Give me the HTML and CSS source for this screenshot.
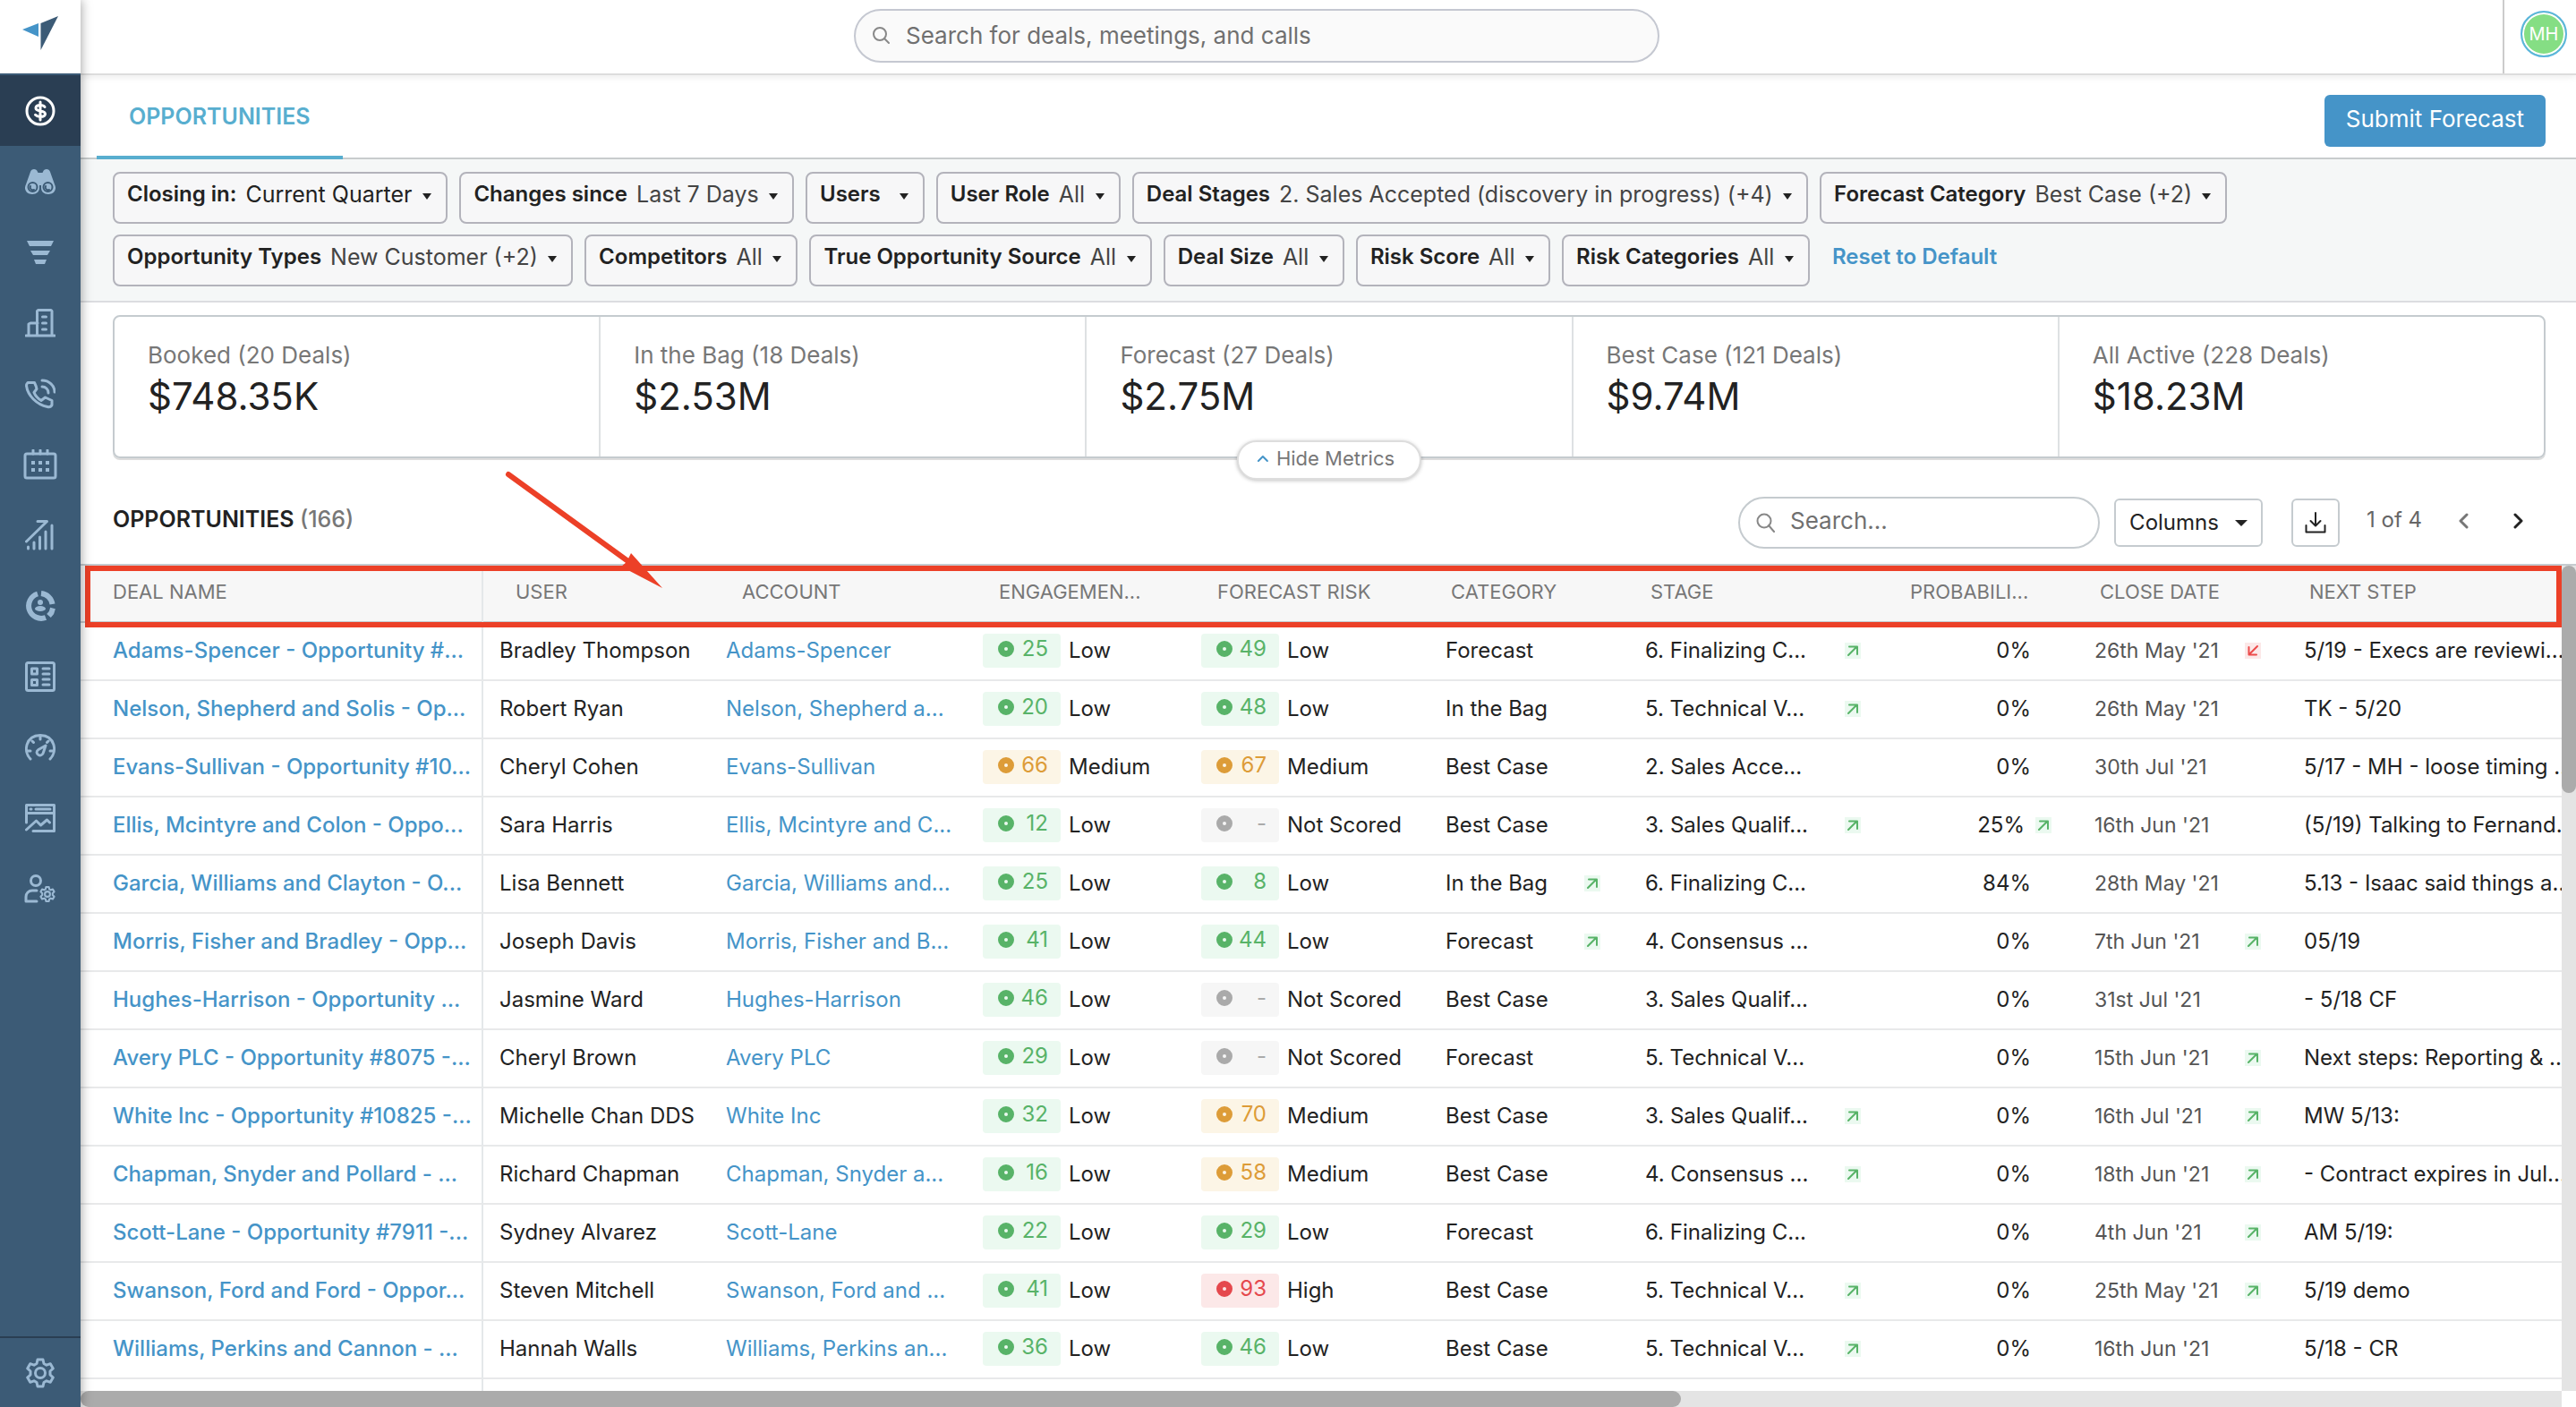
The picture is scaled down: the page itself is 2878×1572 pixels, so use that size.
FILE: index.html
```html
<!DOCTYPE html>
<html lang="en">
<head>
    <meta charset="UTF-8">
    <meta name="viewport" content="width=device-width, initial-scale=1.0">
    <title>Opportunities</title>
    <link rel="stylesheet" href="styles.css">
</head>
<body>
    <svg class="symbols" aria-hidden="true">
        <symbol id="arrow-up" viewBox="0 0 18 18"><path d="M4 14L13 5M5 4.500h9V13" /></symbol>
        <symbol id="arrow-down" viewBox="0 0 18 18"><path d="M14 4L5 13M13 13.500H4.500V5" /></symbol>
        <symbol id="gear" viewBox="0 0 34 34">
            <path d="M14 2h6l1 4.500 3 1.700 4.300-1.500 3 5.200L28 15v4l3.300 3.100-3 5.200-4.300-1.500-3 1.700-1 4.500h-6l-1-4.500-3-1.700-4.300 1.500-3-5.200L6 19v-4L2.700 11.900l3-5.200L10 8.200l3-1.700z" />
            <circle cx="17" cy="17" r="5.500" />
        </symbol>
    </svg>

    <div class="app">
        <nav class="sidebar">
            <a href="#" class="logo" aria-label="Home">
                <svg width="42" height="40" viewBox="0 0 42 40">
                    <path d="M1 15L19 8v15z" fill="#4594c8" />
                    <path d="M21.500 8L41 0 21.500 38z" fill="#3c5b76" />
                </svg>
            </a>
            <a href="#" class="nav-item active" aria-label="Deals">
                <svg width="34" height="34" viewBox="0 0 34 34">
                    <circle cx="17" cy="17" r="15" />
                    <path d="M22 12.500c-1-1.500-2.500-2-5-2-3 0-5 1-5 3.200 0 4.600 10.500 2 10.500 6.600 0 2.200-2.200 3.200-5.500 3.200-2.500 0-4-.6-5.500-2.200M17 7v20" />
                </svg>
            </a>
            <a href="#" class="nav-item" aria-label="Explore">
                <svg width="34" height="30" viewBox="0 0 34 30">
                    <path class="fill" d="M6 4c1-4 7-4 8 0l.5 1h5L20 4c1-4 7-4 8 0l5 14c3 6-1 11-7 11-5 0-8-3-8-7v-3h-2v3c0 4-3 7-8 7-6 0-10-5-7-11z" />
                    <g class="dark"><circle cx="8.500" cy="21" r="5" /><circle cx="25.500" cy="21" r="5" /><path d="M6 20a3 3 0 0 0 4 4M23 20a3 3 0 0 0 4 4" /></g>
                </svg>
            </a>
            <a href="#" class="nav-item" aria-label="Pipeline">
                <svg width="32" height="28" viewBox="0 0 32 28">
                    <path class="fill" d="M1 1h30l-3 6H4zM5 12h22l-3 5H8zM9 22h14l-2 5H11z" />
                </svg>
            </a>
            <a href="#" class="nav-item" aria-label="Accounts">
                <svg width="34" height="32" viewBox="0 0 34 32">
                    <path d="M1 30h32M4 30V17l2-1h8M13.500 30V2.500l1-1H29l1 1V30M19.500 9h4M19.500 16h4M19.500 23h4" />
                </svg>
            </a>
            <a href="#" class="nav-item" aria-label="Calls">
                <svg width="34" height="34" viewBox="0 0 34 34">
                    <path d="M3 4.500h7.500c1 2 2 4.500 2.500 7l-3 4c1.500 4 4 6.500 8 9l4.500-3.500 7.500 3.500v5c-1 2-3 2.500-5 2C13 29 3 19 1.500 8c0-1.500.5-2.500 1.500-3.500zM19 9c4 0 7 3 7 7M19 2c8 0 14 6 14 13" />
                </svg>
            </a>
            <a href="#" class="nav-item" aria-label="Calendar">
                <svg width="38" height="34" viewBox="0 0 38 34">
                    <rect x="2" y="5" width="34" height="27" rx="2" />
                    <path d="M11 1v4M19 1v4M27 1v4" />
                    <path class="fill" d="M9 13h4v4H9zM17 13h4v4h-4zM25 13h4v4h-4zM9 21h4v4H9zM17 21h4v4h-4zM25 21h4v4h-4z" />
                </svg>
            </a>
            <a href="#" class="nav-item" aria-label="Trends">
                <svg width="34" height="34" viewBox="0 0 34 34">
                    <path d="M1.500 24L24 2M14 1.500h10.500M3.500 30v2M10 25v7M16.500 19v13M23 13v19M30 6v26" />
                </svg>
            </a>
            <a href="#" class="nav-item" aria-label="Retention">
                <svg width="34" height="34" viewBox="0 0 34 34">
                    <path class="thick" d="M14 3.500A14 14 0 1 0 23 30M18 3a14 14 0 0 1 12.500 12M31 19.500l-1.500 5-3 3.500" />
                    <circle class="fill" cx="17" cy="13" r="3" />
                    <ellipse class="fill" cx="17" cy="20" rx="6" ry="3" />
                </svg>
            </a>
            <a href="#" class="nav-item" aria-label="Lists">
                <svg width="34" height="34" viewBox="0 0 34 34">
                    <rect x="1.500" y="1.500" width="31" height="31" rx="2" />
                    <rect x="7.500" y="8" width="6" height="6" />
                    <rect x="7.500" y="20.500" width="6" height="6" />
                    <path d="M20 8h7M20 14h7M20 20h7M20 26h7" />
                </svg>
            </a>
            <a href="#" class="nav-item" aria-label="Performance">
                <svg width="34" height="30" viewBox="0 0 34 30">
                    <path d="M6 28C-2 20 0 2 17 1.500 34 2 36 20 28 28M17 3v3M8 8l1.500 1.500M26 8l-1.500 1.500M3 19h3M31 19h-3M23 13l-8 4.500c-3 2-2 5 0 6s5 0 5.500-3z" />
                </svg>
            </a>
            <a href="#" class="nav-item" aria-label="Reports">
                <svg width="34" height="32" viewBox="0 0 34 32">
                    <path d="M1.500 21V1.500h31v29H9M1.500 10.500h31M6 6h1M12 6h16M1.500 29l11-10 5 5 7-6 3 3" />
                </svg>
            </a>
            <a href="#" class="nav-item" aria-label="User settings">
                <svg width="36" height="32" viewBox="0 0 36 32">
                    <circle cx="13" cy="7" r="5.500" />
                    <path d="M14 30H2v-5c0-4 3-7 7-7h5" />
                    <use href="#gear" x="17" y="13" width="18" height="18" stroke-width="4" />
                </svg>
            </a>
            <a href="#" class="nav-item settings" aria-label="Settings">
                <svg width="34" height="34" viewBox="0 0 34 34"><use href="#gear" /></svg>
            </a>
        </nav>

        <div class="main">
            <header class="topbar">
                <label class="search global-search">
                    <svg width="22" height="22" viewBox="0 0 22 22"><circle cx="9" cy="9" r="7" /><path d="M14 14l5 5" /></svg>
                    <input type="search" placeholder="Search for deals, meetings, and calls" aria-label="Search for deals, meetings, and calls">
                </label>
                <div class="profile">
                    <button type="button" class="avatar">MH</button>
                </div>
            </header>

            <div class="tabs">
                <a href="#" class="tab">OPPORTUNITIES</a>
                <button type="button" class="submit-btn">Submit Forecast</button>
            </div>

            <div class="filters">
                <div class="filter-row">
                    <label class="filter dark-value"><b>Closing in:</b><select><option>Current Quarter</option></select></label>
                    <label class="filter"><b>Changes since</b><select><option>Last 7 Days</option></select></label>
                    <label class="filter"><b>Users</b><select><option></option></select></label>
                    <label class="filter"><b>User Role</b><select><option>All</option></select></label>
                    <label class="filter"><b>Deal Stages</b><select><option>2. Sales Accepted (discovery in progress) (+4)</option></select></label>
                    <label class="filter"><b>Forecast Category</b><select><option>Best Case (+2)</option></select></label>
                </div>
                <div class="filter-row">
                    <label class="filter"><b>Opportunity Types</b><select><option>New Customer (+2)</option></select></label>
                    <label class="filter"><b>Competitors</b><select><option>All</option></select></label>
                    <label class="filter"><b>True Opportunity Source</b><select><option>All</option></select></label>
                    <label class="filter"><b>Deal Size</b><select><option>All</option></select></label>
                    <label class="filter"><b>Risk Score</b><select><option>All</option></select></label>
                    <label class="filter"><b>Risk Categories</b><select><option>All</option></select></label>
                    <a href="#" class="reset">Reset to Default</a>
                </div>
            </div>

            <div class="metrics">
                <div class="metric"><p>Booked (20 Deals)</p><h3>$748.35K</h3></div>
                <div class="metric"><p>In the Bag (18 Deals)</p><h3>$2.53M</h3></div>
                <div class="metric"><p>Forecast (27 Deals)</p><h3>$2.75M</h3></div>
                <div class="metric"><p>Best Case (121 Deals)</p><h3>$9.74M</h3></div>
                <div class="metric"><p>All Active (228 Deals)</p><h3>$18.23M</h3></div>
                <button type="button" class="hide-metrics">
                    <svg width="14" height="10" viewBox="0 0 14 10"><path d="M2 8l5-5 5 5" /></svg>
                    Hide Metrics
                </button>
            </div>

            <div class="table-bar">
                <h2>OPPORTUNITIES <span>(166)</span></h2>
                <label class="search table-search">
                    <svg width="22" height="22" viewBox="0 0 22 22"><circle cx="9" cy="9" r="7.500" /><path d="M14 14l6 7" /></svg>
                    <input type="search" placeholder="Search..." aria-label="Search opportunities">
                </label>
                <button type="button" class="outline-btn columns-btn">Columns <i></i></button>
                <button type="button" class="outline-btn download-btn" aria-label="Download">
                    <svg width="24" height="24" viewBox="0 0 24 24"><path d="M12 1v14M6.500 10l5.500 5.500 5.500-5.500M1.500 15v7.500h21V15" /></svg>
                </button>
                <span class="page-count">1 of 4</span>
                <button type="button" class="page-btn prev" aria-label="Previous page">
                    <svg width="12" height="18" viewBox="0 0 12 18"><path d="M10 2L3 9l7 7" /></svg>
                </button>
                <button type="button" class="page-btn" aria-label="Next page">
                    <svg width="12" height="18" viewBox="0 0 12 18"><path d="M2 2l7 7-7 7" /></svg>
                </button>
            </div>

            <div class="table-area">
                <div class="table-scroll">
                    <table>
                        <colgroup>
                            <col class="col-deal"><col class="col-user"><col class="col-account"><col class="col-engagement"><col class="col-risk">
                            <col class="col-category"><col class="col-stage"><col class="col-prob"><col class="col-date"><col>
                        </colgroup>
                        <thead>
                            <tr>
                                <th>DEAL NAME</th>
                                <th>USER</th>
                                <th>ACCOUNT</th>
                                <th>ENGAGEMEN...</th>
                                <th>FORECAST RISK</th>
                                <th class="near">CATEGORY</th>
                                <th class="near">STAGE</th>
                                <th>PROBABILI...</th>
                                <th class="near">CLOSE DATE</th>
                                <th class="near">NEXT STEP</th>
                            </tr>
                        </thead>
                        <tbody id="deals"></tbody>
                    </table>
                </div>
                <div class="scroll-y"><div class="thumb"></div></div>
                <div class="scroll-x"><div class="thumb"></div></div>
                <div class="highlight"></div>
                <svg class="pointer" width="180" height="134" viewBox="0 0 180 134">
                    <path d="M5 5L140 103" stroke="#ec4027" stroke-width="6" />
                    <path d="M177 132L131 108l6-5 5-10z" fill="#ec4027" />
                </svg>
            </div>
        </div>
    </div>
    <script src="script.js"></script>
</body>
</html>
```
FILE: styles.css
```css
* {
    box-sizing: border-box;
}

body {
    margin: 0;
    font-family: Inter, "Liberation Sans", sans-serif;
    font-size: 24px;
    line-height: 32px;
    color: #222;
    background: #fff;
}

button, input, select {
    font: inherit;
    color: inherit;
}

button {
    cursor: pointer;
}

a {
    color: #4594c8;
    text-decoration: none;
}

svg {
    fill: none;
    stroke-linecap: round;
    stroke-linejoin: round;
}

.symbols {
    position: absolute;
    width: 0;
    height: 0;
}

.app {
    display: flex;
    height: 100vh;
    overflow: hidden;
}

/* sidebar */
.sidebar {
    position: relative;
    z-index: 2;
    display: flex;
    flex-direction: column;
    flex: none;
    width: 90px;
    background: #3c5b76;
    box-shadow: 0 0 12px rgba(0, 0, 0, 0.4);
}

.logo {
    height: 84px;
    padding: 18px 24px;
    background: #fff;
    border-bottom: 2px solid #3c5b76;
}

.nav-item {
    display: flex;
    align-items: center;
    justify-content: center;
    height: 79px;
}

.nav-item svg {
    stroke: #9bb9d3;
    stroke-width: 3;
}

.nav-item .fill {
    fill: #9bb9d3;
    stroke: none;
}

.nav-item .dark {
    stroke: #3c5b76;
    stroke-width: 2;
}

.nav-item .thick {
    stroke-width: 6;
    stroke-linecap: butt;
}

.nav-item.active {
    background: #2a3e53;
}

.nav-item.active svg {
    stroke: #fff;
}

.nav-item.settings {
    margin-top: auto;
    border-top: 2px solid #2a3e53;
}

.main {
    display: flex;
    flex-direction: column;
    flex: 1;
    min-width: 0;
}

/* top bar */
.topbar {
    position: relative;
    z-index: 1;
    display: flex;
    justify-content: center;
    height: 84px;
    padding-top: 10px;
    border-bottom: 2px solid #ddd;
    box-shadow: 0 2px 8px rgba(0, 0, 0, 0.08);
}

.search {
    display: flex;
    align-items: center;
    gap: 16px;
    height: 60px;
    border: 2px solid #c5cbcf;
    border-radius: 30px;
    font-size: 26px;
}

.search svg {
    flex: none;
    stroke: #888;
    stroke-width: 2;
}

.search input {
    flex: 1;
    min-width: 0;
    padding: 0;
    border: none;
    outline: none;
    background: none;
}

.search input::placeholder {
    color: #707070;
    opacity: 1;
}

.global-search {
    width: 900px;
    margin-right: 160px;
    padding: 0 18px;
    border-color: #c5c8d1;
    background: #fafafa;
}

.profile {
    position: absolute;
    top: 0;
    right: 0;
    display: flex;
    justify-content: center;
    width: 82px;
    height: 82px;
    padding-top: 12px;
    border-left: 2px solid #ccc;
}

.avatar {
    width: 52px;
    height: 52px;
    margin-left: 8px;
    padding: 0;
    border: 2px solid #5bb5dd;
    border-radius: 50%;
    background: #85de84;
    box-shadow: inset 0 0 0 2px #fff;
    color: #fff;
    font-size: 20px;
}

/* tabs */
.tabs {
    display: flex;
    justify-content: space-between;
    height: 94px;
    padding: 0 34px 0 18px;
    border-bottom: 2px solid #c8cccd;
}

.tab {
    height: 94px;
    padding: 30px 36px;
    border-bottom: 4px solid #58aecf;
    color: #58aecf;
    font-size: 25px;
    font-weight: 600;
}

.submit-btn {
    height: 58px;
    margin-top: 22px;
    padding: 0 24px 4px;
    border: none;
    border-radius: 6px;
    background: #4594c8;
    color: #fff;
    font-size: 26px;
}

/* filters */
.filters {
    padding: 14px 36px 16px;
    background: #f5f7f7;
    border-bottom: 2px solid #dcdde0;
}

.filter-row {
    display: flex;
    gap: 13px;
}

.filter-row + .filter-row {
    margin-top: 12px;
}

.filter {
    display: flex;
    height: 58px;
    padding: 7px 16px 7px 14px;
    border: 2px solid #b3b3bb;
    border-radius: 8px;
    background: #f7f7f8;
    white-space: nowrap;
}

.filter b {
    margin-right: 10px;
    font-weight: 600;
}

.filter select {
    height: 32px;
    padding: 0;
    border: none;
    background: none;
    appearance: none;
    color: #444;
    font-size: 25px;
}

.filter.dark-value select {
    color: #222;
}

.filter::after,
.columns-btn i {
    content: "";
    border: 5px solid transparent;
    border-top: 7px solid #222;
    border-bottom: none;
}

.filter::after {
    margin: 15px 0 0 11px;
    height: 0;
}

.reset {
    padding-top: 9px;
    padding-left: 12px;
    font-weight: 600;
}

/* metrics */
.metrics {
    position: relative;
    display: flex;
    flex: none;
    height: 160px;
    margin: 14px 34px 0 36px;
    border: 2px solid #c5cbcf;
    border-radius: 8px;
    box-shadow: 0 2px 0 #ddd;
}

.metric {
    flex: 1;
    padding: 27px 37px;
    border-right: 2px solid #dee1e3;
}

.metric:nth-child(5) {
    border-right: none;
}

.metric p {
    margin: 0;
    color: #777;
    font-size: 26px;
}

.metric h3 {
    margin: 6px 0 0;
    font-size: 42px;
    line-height: 48px;
    font-weight: 400;
}

.hide-metrics {
    position: absolute;
    left: 50%;
    bottom: -26px;
    display: flex;
    align-items: center;
    gap: 8px;
    height: 44px;
    padding: 0 28px 4px 20px;
    transform: translateX(-50%);
    border: 2px solid #ddd;
    border-radius: 22px;
    background: #fff;
    box-shadow: 0 1px 4px rgba(0, 0, 0, 0.25);
    color: #777;
    font-size: 22px;
}

.hide-metrics svg {
    stroke: #4594c8;
    stroke-width: 2;
}

/* table toolbar */
.table-bar {
    display: flex;
    align-items: center;
    height: 118px;
    padding: 26px 48px 0 36px;
}

.table-bar h2 {
    margin: 0 auto 8px 0;
    font-size: 25px;
    font-weight: 600;
}

.table-bar h2 span {
    color: #777;
    font-weight: 500;
}

.table-search {
    width: 404px;
    height: 58px;
    margin-right: 16px;
    padding: 0 18px;
}

.table-search input {
    padding-bottom: 4px;
}

.outline-btn {
    display: flex;
    align-items: center;
    justify-content: center;
    height: 54px;
    padding: 0;
    border: 2px solid #c5cbcf;
    border-radius: 6px;
    background: #fff;
}

.columns-btn {
    gap: 18px;
    width: 166px;
    margin-right: 32px;
}

.columns-btn i {
    border-width: 7px 7px 0;
}

.download-btn {
    width: 54px;
    margin-right: 30px;
}

.download-btn svg,
.page-btn svg {
    stroke: #222;
    stroke-width: 2;
}

.page-count {
    width: 92px;
    padding-bottom: 6px;
    color: #666;
}

.page-btn {
    width: 32px;
    padding: 0 0 4px;
    border: none;
    background: none;
    line-height: 0;
}

.page-btn svg {
    stroke-width: 3;
}

.page-btn.prev {
    margin-right: 30px;
}

.page-btn.prev svg {
    stroke: #777;
}

/* table */
.table-area {
    position: relative;
    display: grid;
    grid-template-columns: 1fr 16px;
    grid-template-rows: 1fr 18px;
    flex: 1;
    min-height: 0;
    border-top: 2px solid #c5cbcf;
}

.table-scroll {
    overflow: hidden;
}

table {
    width: 100%;
    table-layout: fixed;
    border-collapse: separate;
    border-spacing: 0;
}

.col-deal { width: 450px; }
.col-user { width: 253px; }
.col-account { width: 287px; }
.col-engagement { width: 244px; }
.col-risk { width: 273px; }
.col-category { width: 223px; }
.col-stage { width: 278px; }
.col-prob { width: 224px; }
.col-date { width: 234px; }

th {
    height: 64px;
    padding: 0 0 4px 36px;
    border-bottom: 2px solid #c5cbcf;
    background: #f7f7f7;
    color: #777;
    font-size: 22px;
    font-weight: 400;
    text-align: left;
    white-space: nowrap;
}

th.near {
    padding-left: 24px;
}

td {
    height: 65px;
    padding: 0 0 2px 18px;
    border-bottom: 2px solid #e8e9ea;
    white-space: nowrap;
    overflow: hidden;
}

th:first-child,
td:first-child {
    padding-left: 36px;
    border-right: 2px solid #e4e8ea;
}

td:first-child a {
    font-weight: 500;
}

td.date {
    color: #555;
    font-size: 23px;
}

.cell {
    display: flex;
    align-items: center;
}

.prob .cell {
    justify-content: flex-end;
    gap: 12px;
    padding-right: 30px;
}

.prob .cell.plain {
    padding-right: 53px;
}

.badge {
    display: flex;
    align-items: center;
    justify-content: space-between;
    width: 87px;
    height: 38px;
    margin-right: 9px;
    padding: 0 14px 4px 17px;
    border-radius: 4px;
}

.badge::before {
    content: "";
    box-sizing: border-box;
    width: 18px;
    height: 18px;
    border: 7px solid;
    border-radius: 50%;
}

.low { background: #ebf9f0; color: #58b368; }
.medium { background: #fcf5e6; color: #dd9c38; }
.high { background: #fce8e8; color: #e5484d; }
.none { background: #f6f6f6; color: #aaa; }

.change {
    width: 18px;
    height: 18px;
    background: #ebf9f0;
    stroke: #58b368;
    stroke-width: 2;
}

.change.down {
    background: #fce8e8;
    stroke: #ec4b4b;
}

.stage .change { margin-left: auto; margin-right: 19px; }
.category .change { margin-left: auto; margin-right: 32px; }
.date .change { margin-left: auto; margin-right: 30px; }

.scroll-y,
.scroll-x {
    background: #e4e4e4;
}

.thumb {
    border-radius: 9px;
    background: #ababab;
}

.scroll-y .thumb {
    height: 27.500%;
}

.scroll-x .thumb {
    width: 64.500%;
    height: 100%;
}

/* callout over the header row */
.highlight {
    position: absolute;
    top: 0;
    left: 5px;
    right: 16px;
    height: 69px;
    border: 6px solid #ec4027;
}

.pointer {
    position: absolute;
    top: -107px;
    left: 473px;
}
```
FILE: script.js
```js
// deal, user, account, engagement, risk, category, category change, stage, stage change,
// probability, probability change, close date, date change, next step
const deals = [
    ["Adams-Spencer - Opportunity #...", "Bradley Thompson", "Adams-Spencer", 25, 49, "Forecast", "", "6. Finalizing C...", "up", "0%", "", "26th May '21", "down", "5/19 - Execs are reviewi..."],
    ["Nelson, Shepherd and Solis - Op...", "Robert Ryan", "Nelson, Shepherd a...", 20, 48, "In the Bag", "", "5. Technical V...", "up", "0%", "", "26th May '21", "", "TK - 5/20"],
    ["Evans-Sullivan - Opportunity #10...", "Cheryl Cohen", "Evans-Sullivan", 66, 67, "Best Case", "", "2. Sales Acce...", "", "0%", "", "30th Jul '21", "", "5/17 - MH - loose timing ..."],
    ["Ellis, Mcintyre and Colon - Oppo...", "Sara Harris", "Ellis, Mcintyre and C...", 12, null, "Best Case", "", "3. Sales Qualif...", "up", "25%", "up", "16th Jun '21", "", "(5/19) Talking to Fernand..."],
    ["Garcia, Williams and Clayton - O...", "Lisa Bennett", "Garcia, Williams and...", 25, 8, "In the Bag", "up", "6. Finalizing C...", "", "84%", "", "28th May '21", "", "5.13 - Isaac said things a..."],
    ["Morris, Fisher and Bradley - Opp...", "Joseph Davis", "Morris, Fisher and B...", 41, 44, "Forecast", "up", "4. Consensus ...", "", "0%", "", "7th Jun '21", "up", "05/19"],
    ["Hughes-Harrison - Opportunity ...", "Jasmine Ward", "Hughes-Harrison", 46, null, "Best Case", "", "3. Sales Qualif...", "", "0%", "", "31st Jul '21", "", "- 5/18 CF"],
    ["Avery PLC - Opportunity #8075 -...", "Cheryl Brown", "Avery PLC", 29, null, "Forecast", "", "5. Technical V...", "", "0%", "", "15th Jun '21", "up", "Next steps: Reporting & ..."],
    ["White Inc - Opportunity #10825 -...", "Michelle Chan DDS", "White Inc", 32, 70, "Best Case", "", "3. Sales Qualif...", "up", "0%", "", "16th Jul '21", "up", "MW 5/13:"],
    ["Chapman, Snyder and Pollard - ...", "Richard Chapman", "Chapman, Snyder a...", 16, 58, "Best Case", "", "4. Consensus ...", "up", "0%", "", "18th Jun '21", "up", "- Contract expires in Jul..."],
    ["Scott-Lane - Opportunity #7911 -...", "Sydney Alvarez", "Scott-Lane", 22, 29, "Forecast", "", "6. Finalizing C...", "", "0%", "", "4th Jun '21", "up", "AM 5/19:"],
    ["Swanson, Ford and Ford - Oppor...", "Steven Mitchell", "Swanson, Ford and ...", 41, 93, "Best Case", "", "5. Technical V...", "up", "0%", "", "25th May '21", "up", "5/19 demo"],
    ["Williams, Perkins and Cannon - ...", "Hannah Walls", "Williams, Perkins an...", 36, 46, "Best Case", "", "5. Technical V...", "up", "0%", "", "16th Jun '21", "", "5/18 - CR"]
];

function change(dir) {
    return dir ? `<svg class="change ${dir}"><use href="#arrow-${dir}"/></svg>` : "";
}

function score(value) {
    let level = ["low", "Low"];
    if (value === null) level = ["none", "Not Scored"];
    else if (value > 80) level = ["high", "High"];
    else if (value > 50) level = ["medium", "Medium"];
    return `<div class="cell"><span class="badge ${level[0]}">${value === null ? "-" : value}</span>${level[1]}</div>`;
}

const rows = deals.map(d => `
    <tr>
        <td><a href="#">${d[0]}</a></td>
        <td>${d[1]}</td>
        <td><a href="#">${d[2]}</a></td>
        <td>${score(d[3])}</td>
        <td>${score(d[4])}</td>
        <td class="category"><div class="cell">${d[5]}${change(d[6])}</div></td>
        <td class="stage"><div class="cell">${d[7]}${change(d[8])}</div></td>
        <td class="prob"><div class="cell ${d[10] ? "" : "plain"}">${d[9]}${change(d[10])}</div></td>
        <td class="date"><div class="cell">${d[11]}${change(d[12])}</div></td>
        <td>${d[13].replace("&", "&amp;")}</td>
    </tr>`);

// next row starts just above the scrollbar
rows.push("<tr>" + "<td></td>".repeat(10) + "</tr>");
document.getElementById("deals").innerHTML = rows.join("");
```
